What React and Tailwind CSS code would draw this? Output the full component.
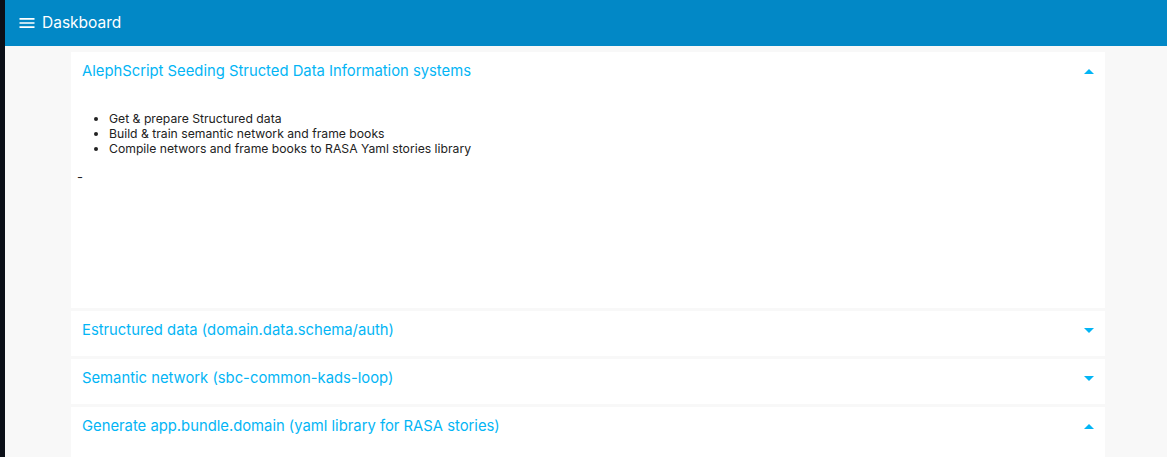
import { useState } from "react";

const sections = [
  {
    title: "AlephScript Seeding Structed Data Information systems",
    open: true,
    items: [
      "Get & prepare Structured data",
      "Build & train semantic network and frame books",
      "Compile networs and frame books to RASA Yaml stories library",
    ],
  },
  { title: "Estructured data (domain.data.schema/auth)", open: false },
  { title: "Semantic network (sbc-common-kads-loop)", open: false },
  { title: "Generate app.bundle.domain (yaml library for RASA stories)", open: true },
];

function Caret({ up }) {
  return (
    <svg width="10" height="5" viewBox="0 0 10 5" className="shrink-0">
      {up ? <path d="M0 5 L5 0 L10 5 Z" fill="#03b5f5" /> : <path d="M0 0 L5 5 L10 0 Z" fill="#03b5f5" />}
    </svg>
  );
}

function Section({ section, height }) {
  const [open, setOpen] = useState(section.open);
  return (
    <div className={"shrink-0 bg-white " + height}>
      <button
        onClick={() => setOpen(!open)}
        className="flex h-[38px] w-full items-center justify-between pl-[11px] pr-[11px] pt-[1px] text-left"
      >
        <span className="text-[14.8px] text-[#03b5f5]">{section.title}</span>
        <Caret up={open} />
      </button>
      {section.items && open && (
        <div className="pl-[6px] pt-[21px]">
          <ul className="list-disc pl-[32px] text-[12.2px] leading-[15px] text-[#222]">
            {section.items.map((it, i) => (
              <li key={i}>{it}</li>
            ))}
          </ul>
          <div className="mt-[14px] text-[13px] leading-[15px] text-[#222]">-</div>
        </div>
      )}
    </div>
  );
}

const heights = ["h-[256px]", "h-[45px]", "h-[45px]", "h-[60px]"];

export default function App() {
  return (
    <div
      className="flex h-[457px] overflow-hidden bg-[#0b0f18]"
      style={{ fontFamily: "Inter, Roboto, 'Liberation Sans', sans-serif" }}
    >
      <div className="ml-[5px] flex flex-1 flex-col overflow-hidden bg-[#f8f8f8]">
        <header className="flex h-[46px] shrink-0 items-center gap-[5px] bg-[#0288c6] pl-[12px] text-white">
          <svg width="20" height="20" viewBox="0 0 24 24" fill="white">
            <path d="M3 18h18v-2H3v2zm0-5h18v-2H3v2zm0-7v2h18V6H3z" />
          </svg>
          <span className="text-[15.5px]">Daskboard</span>
        </header>
        <main className="flex flex-col gap-[3px] pl-[66px] pr-[62px] pt-[6px]">
          {sections.map((s, i) => (
            <Section key={i} section={s} height={heights[i]} />
          ))}
        </main>
      </div>
    </div>
  );
}
